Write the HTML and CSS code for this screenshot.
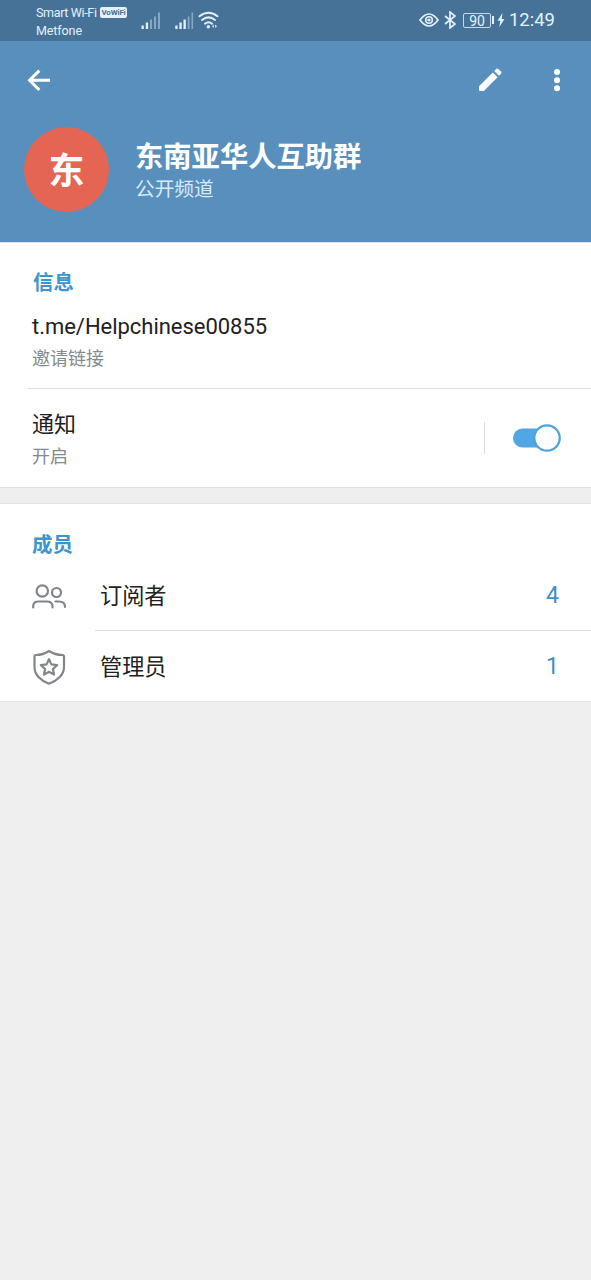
FILE: index.html
```html
<!DOCTYPE html>
<html lang="zh-CN">
<head>
<meta charset="utf-8">
<title>东南亚华人互助群</title>
<link rel="stylesheet" href="styles.css">
</head>
<body>
<div class="status">
  <div class="carrier">
    <div class="carrier-line"><span class="carrier-name">Smart Wi-Fi</span><span class="vowifi">VoWiFi</span></div>
    <div class="carrier-line">Metfone</div>
  </div>
  <svg class="signals" width="80" height="20" viewBox="0 0 80 20">
    <g fill="#e4f1fc">
      <path d="M1.500 14.500h2.300V18H1.500zM5.800 11.500h2.300V18H5.800zM35.300 14.500h2.300V18h-2.300zM39.400 11.500h2.300V18h-2.300zM43.500 8.500h2.300V18h-2.300z"/>
    </g>
    <g fill="#86a8c5">
      <path d="M10 8.500h2V18h-2zM14 5.500h2V18h-2zM18 1.500h2V18h-2zM47.700 5.500h1.800V18h-1.800zM51.500 1.500h1.600V18h-1.600z"/>
    </g>
    <g fill="none" stroke="#e4f1fc" stroke-width="2" stroke-linecap="round">
      <path d="M59.500 5.200Q68.500-1.800 77.500 5.200M62 9Q68.500 3.800 75 9M65 12.700Q68.500 9.800 72 12.700"/>
    </g>
    <circle cx="68.300" cy="15.800" r="1.700" fill="#e4f1fc"/>
    <path d="M73.800 13.500l-1.800 1.800 1.800 1.800zM75.200 13.500l1.800 1.800-1.800 1.800z" fill="#e4f1fc"/>
  </svg>
  <div class="indicators">
    <svg width="20" height="16" viewBox="0 0 20 16">
      <path d="M1 8Q10-4 19 8Q10 20 1 8z" fill="none" stroke="#e4f1fc" stroke-width="1.700"/>
      <circle cx="10" cy="8" r="3.300" fill="none" stroke="#e4f1fc" stroke-width="1.600"/>
      <circle cx="10" cy="8" r="1.600" fill="#e4f1fc"/>
    </svg>
    <svg class="bluetooth" width="12" height="18" viewBox="0 0 12 18">
      <path d="M1 5l10 8-5 4V1l5 4-10 8" fill="none" stroke="#e4f1fc" stroke-width="1.700"/>
    </svg>
    <div class="battery">90</div><div class="battery-tip"></div>
    <svg class="bolt" width="8" height="14" viewBox="0 0 8 14"><path d="M5.500 0L.5 7.800h2.800L2.300 14l5.200-8H4.700z" fill="#e4f1fc"/></svg>
    <div class="clock">12:49</div>
  </div>
</div>

<header class="header">
  <div class="toolbar">
    <svg class="back" width="24" height="24" viewBox="0 0 24 24">
      <path d="M23 12.300H3M12.300 2.600L2.600 12.300l9.700 9.700" fill="none" stroke="#fff" stroke-width="3"/>
    </svg>
    <svg class="edit" width="24" height="24" viewBox="0 0 24 24">
      <path d="M1 18.200L14.800 4.400l4.800 4.800L5.800 23H2q-1 0-1-1z" fill="#fff"/>
      <path d="M16.200 3l2-2q1.100-1 2.200 0l2.600 2.600q1 1.100 0 2.200l-2 2z" fill="#fff"/>
    </svg>
    <svg width="8" height="24" viewBox="0 0 8 24" fill="#fff"><circle cx="4" cy="4" r="3"/><circle cx="4" cy="12.200" r="3"/><circle cx="4" cy="20.300" r="3"/></svg>
  </div>
  <div class="profile">
    <div class="avatar">东</div>
    <div>
      <div class="name">东南亚华人互助群</div>
      <div class="kind">公开频道</div>
    </div>
  </div>
</header>

<section class="info">
  <h2 class="heading">信息</h2>
  <div class="link-row">
    <div class="primary">t.me/Helpchinese00855</div>
    <div class="secondary">邀请链接</div>
  </div>
  <div class="notify-row">
    <div class="notify-text">
      <div class="primary">通知</div>
      <div class="secondary">开启</div>
    </div>
    <div class="rule"></div>
    <svg width="50" height="30" viewBox="0 0 50 30">
      <rect x="1" y="5.500" width="44" height="19" rx="9.500" fill="#50a7e3"/>
      <circle cx="35" cy="15" r="12.700" fill="#fff" stroke="#50a2da" stroke-width="2.300"/>
    </svg>
  </div>
</section>

<section class="members">
  <h2 class="heading">成员</h2>
  <div class="member-row">
    <svg class="member-icon" width="36" height="38" viewBox="0 0 36 38" fill="none" stroke="#81868b" stroke-width="2.200" stroke-linecap="round">
      <circle cx="10.300" cy="13" r="5.700"/><circle cx="24.500" cy="14.500" r="4.500"/>
      <path d="M1.200 29.500v-1.300Q1.200 23.500 6.500 23.500h8.200Q20.500 23.500 20.500 28.200v1.300M23.500 23.500h3.200Q33 23.500 33 28.500v.5"/>
    </svg>
    <div class="member-body first"><span>订阅者</span><span class="count">4</span></div>
  </div>
  <div class="member-row last-row">
    <svg class="member-icon" width="36" height="38" viewBox="0 0 36 38" fill="none" stroke="#81868b" stroke-width="2.200" stroke-linejoin="round">
      <path d="M17 3Q23 7 30.500 7Q32 7 32 8.500V19C32 27 25 33 17 35.700C9 33 2.500 27 2.500 19V8.500Q2.500 7 4 7Q11 7 17 3z"/>
      <path d="M17 11.200l2.400 5.200 5.700.7-4.200 3.900 1.100 5.600-5-2.800-5 2.800 1.100-5.600-4.200-3.900 5.700-.7z"/>
    </svg>
    <div class="member-body"><span>管理员</span><span class="count">1</span></div>
  </div>
</section>
</body>
</html>
```

FILE: styles.css
```css
* { box-sizing: border-box; }
body {
  margin: 0;
  min-height: 1280px;
  background: #efefef;
  color: #212121;
  font-family: Roboto, "Noto Sans CJK SC", sans-serif;
}
svg { display: block; flex: none; }

.status {
  display: flex;
  height: 41px;
  background: #467298;
  color: #e4f1fc;
}
.carrier { width: 100px; margin-left: 36px; padding-top: 3px; }
.carrier-line { display: flex; align-items: center; height: 18px; font-size: 12.5px; letter-spacing: -0.1px; white-space: nowrap; }
.carrier-name { width: 64px; letter-spacing: -0.35px; }
.vowifi {
  width: 27px;
  height: 11px;
  border-radius: 2px;
  background: #e4f1fc;
  color: #467298;
  font-size: 8px;
  font-weight: 700;
  letter-spacing: -0.2px;
  line-height: 12px;
  text-align: center;
}
.signals { margin: 11px 0 0 4px; }
.indicators { display: flex; align-items: center; height: 40px; margin: 0 36px 0 auto; }
.bluetooth { margin-left: 5px; }
.battery {
  width: 28px;
  height: 15px;
  margin-left: 7px;
  border: 1px solid #c4d9ee;
  border-radius: 2px;
  font-size: 14px;
  line-height: 14px;
  text-align: center;
}
.battery-tip { width: 2px; height: 8px; margin-left: 1px; background: #e4f1fc; }
.bolt { margin-left: 3px; }
.clock { width: 46px; margin-left: 4px; font-size: 18.4px; line-height: 42px; white-space: nowrap; }

.header { height: 202px; background: #598fbc; border-bottom: 1px solid #dfe4f3; }
.toolbar { display: flex; align-items: center; height: 78px; padding: 0 30px 0 27px; }
.edit { margin: 0 51px 0 auto; }
.profile { display: flex; height: 102px; padding: 8px 0 0 24px; }
.avatar {
  width: 85px;
  height: 85px;
  margin-right: 26px;
  border-radius: 50%;
  background: #e56555;
  color: #fff;
  font-size: 36px;
  font-weight: 700;
  line-height: 90px;
  text-align: center;
}
.name { margin-top: 12px; color: #fff; font-size: 28.3px; font-weight: 700; line-height: 38px; }
.kind { color: #d7eafa; font-size: 19.7px; line-height: 26px; }

.info { height: 245px; padding-top: 27px; background: #fff; border-bottom: 1px solid #dfdfdf; }
.heading { margin: 0 0 0 33px; color: #3d95ce; font-size: 20.4px; font-weight: 700; line-height: 26px; }
.link-row { height: 93px; margin-left: 28px; padding: 14px 0 0 4px; border-bottom: 1px solid #dedede; }
.primary { font-size: 22px; line-height: 34px; }
.secondary { color: #858a8e; font-size: 18px; line-height: 30px; }
.link-row .primary { letter-spacing: -0.03px; }
.notify-row { display: flex; align-items: center; height: 98px; padding: 0 29px 0 32px; }
.notify-text { flex: 1; padding-top: 3px; }
.notify-text .secondary { line-height: 29px; }
.rule { width: 1px; height: 32px; margin-right: 27px; background: #dadada; }

.members { height: 199px; margin-top: 15px; padding-top: 28px; background: #fff; border-top: 1px solid #e2e2e2; border-bottom: 1px solid #e4e4e4; }
.members .heading { margin-left: 32px; }
.member-row { display: flex; height: 73px; padding-left: 32px; }
.last-row { height: 70px; }
.member-icon { margin-top: 20px; }
.last-row .member-icon { margin-top: 17px; }
.member-body { display: flex; flex: 1; justify-content: space-between; margin-left: 27px; padding: 5px 32px 0 5px; font-size: 22.2px; line-height: 66px; }
.member-body.first { border-bottom: 1px solid #dedede; }
.last-row .member-body { padding-top: 3px; }
.count { color: #3e8fc5; font-size: 23px; }
```
